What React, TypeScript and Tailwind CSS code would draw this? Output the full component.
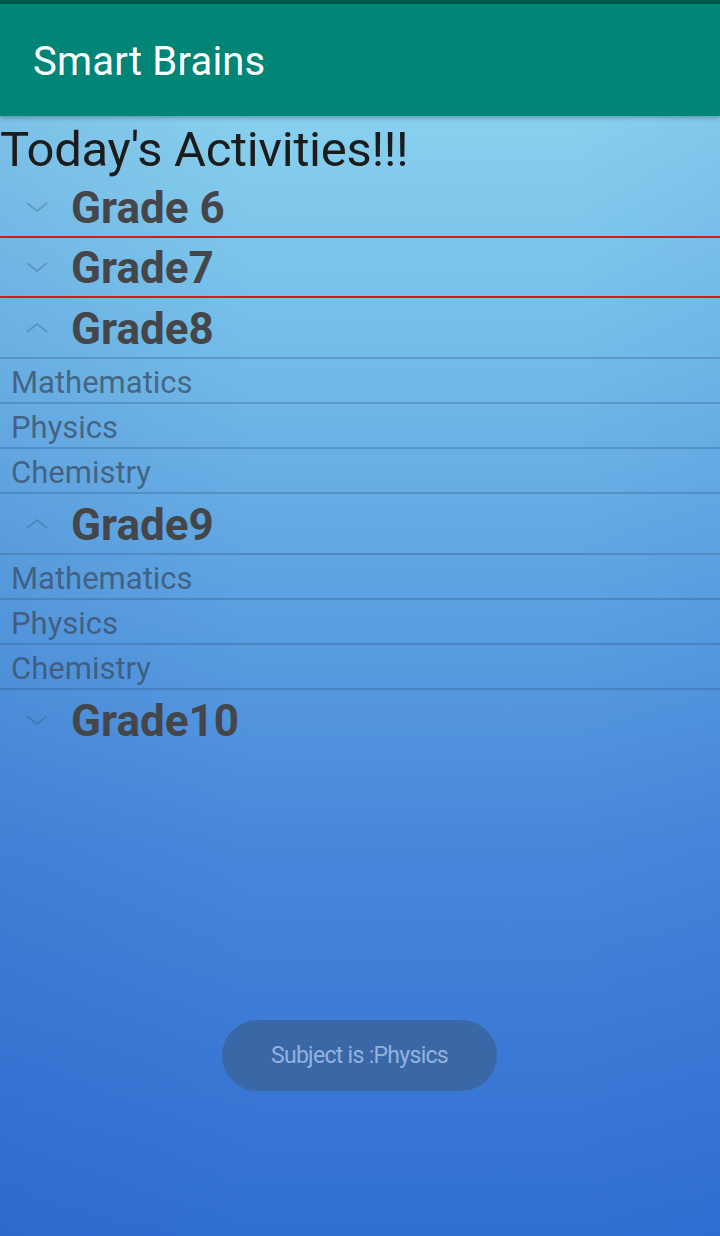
import { useState } from "react";

type Grade = {
  name: string;
  open: boolean;
  line: "red" | "blue" | "none";
};

const grades: Grade[] = [
  { name: "Grade 6", open: false, line: "red" },
  { name: "Grade7", open: false, line: "red" },
  { name: "Grade8", open: true, line: "blue" },
  { name: "Grade9", open: true, line: "blue" },
  { name: "Grade10", open: false, line: "none" },
];

const subjects = ["Mathematics", "Physics", "Chemistry"];

function Chevron({ up }: { up: boolean }) {
  return (
    <svg width="24" height="12" viewBox="0 0 24 12" className="shrink-0" aria-hidden="true">
      <path
        d={up ? "M2 10 L12 2 L22 10" : "M2 2 L12 10 L22 2"}
        fill="none"
        stroke="rgba(50,75,110,0.3)"
        strokeWidth="2"
      />
    </svg>
  );
}

export default function App() {
  const [toast] = useState("Subject is :Physics");

  return (
    <div className="relative flex h-[1236px] w-[720px] flex-col overflow-hidden font-['Roboto',sans-serif]">
      <div className="h-[4px] bg-[#00594e]" />
      <div className="z-10 flex h-[112px] items-center bg-[#008577] px-[33px] pt-[4px] shadow-[0_2px_4px_rgba(0,0,0,0.25)]">
        <h1 className="text-[40px] font-normal tracking-[0.2px] text-white">Smart Brains</h1>
      </div>

      <div className="flex-1 bg-[linear-gradient(to_right,rgba(20,60,170,0.10),transparent_35%,transparent_80%,rgba(20,80,200,0.06)),linear-gradient(to_bottom,#88d0ee_0%,#72bbe8_22%,#5a9fe0_45%,#4787da_65%,#3c7ad6_82%,#2f6fd0_100%)]">
        <p className="h-[62px] pt-[5px] text-[49px] leading-[58px] tracking-[-0.3px] text-[#1c1c1c]">
          Today's Activities!!!
        </p>

        {grades.map((g) => (
          <div key={g.name}>
            <div
              className={`flex items-center ${g.open ? "h-[61px]" : "h-[60px]"} ${
                g.line === "red"
                  ? "border-b-2 border-[#e0141e]"
                  : g.line === "blue"
                  ? "border-b-2 border-[rgba(40,75,120,0.28)]"
                  : ""
              }`}
            >
              <div className="flex w-[71px] justify-center pl-[12px] pr-[10px]">
                <Chevron up={g.open} />
              </div>
              <span className="pt-[2px] text-[44px] font-bold leading-none text-[#444649]">{g.name}</span>
            </div>
            {g.open &&
              subjects.map((s) => (
                <div
                  key={s}
                  className="flex h-[45px] items-center border-b-2 border-[rgba(40,75,120,0.28)] pl-[11px] pt-[4px]"
                >
                  <span className="text-[31px] leading-none text-[rgba(60,80,105,0.78)]">{s}</span>
                </div>
              ))}
          </div>
        ))}
      </div>

      <div className="absolute bottom-[145px] left-[222px] flex h-[71px] w-[275px] items-center justify-center rounded-full bg-[#3a67a6]">
        <span className="pt-[2px] text-[23px] tracking-[-0.7px] text-[#92b2de]">{toast}</span>
      </div>
    </div>
  );
}
